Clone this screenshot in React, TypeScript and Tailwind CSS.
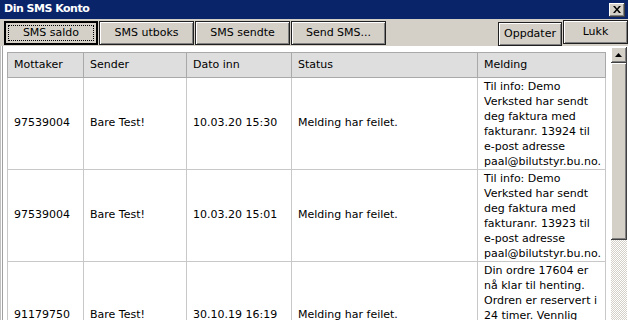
import React from 'react';

const font = "font-['DejaVu_Sans',sans-serif]";

type Row = {
  to: string;
  sender: string;
  date: string;
  status: string;
  lines: string[];
};

const rows: Row[] = [
  {
    to: '97539004',
    sender: 'Bare Test!',
    date: '10.03.20 15:30',
    status: 'Melding har feilet.',
    lines: ['Til info: Demo', 'Verksted har sendt', 'deg faktura med', 'fakturanr. 13924 til', 'e-post adresse', 'paal@bilutstyr.bu.no.'],
  },
  {
    to: '97539004',
    sender: 'Bare Test!',
    date: '10.03.20 15:01',
    status: 'Melding har feilet.',
    lines: ['Til info: Demo', 'Verksted har sendt', 'deg faktura med', 'fakturanr. 13923 til', 'e-post adresse', 'paal@bilutstyr.bu.no.'],
  },
  {
    to: '91179750',
    sender: 'Bare Test!',
    date: '30.10.19 16:19',
    status: 'Melding har feilet.',
    lines: ['Din ordre 17604 er', 'nå klar til henting.', 'Ordren er reservert i', '24 timer. Vennlig', 'hilsen Demo', 'Verksted AS', 'tlf. 32 00 00 00'],
  },
];

const ToolButton = ({ label, w, focused }: { label: string; w: string; focused?: boolean }) => (
  <div
    className={`${w} h-[24px] shrink-0 bg-[#d4d0c8] flex items-center justify-center text-[11px] text-black whitespace-nowrap ${
      focused ? 'border-2 border-black p-[2px]' : 'border border-[#202020] shadow-[inset_1px_1px_0_#fff,inset_-1px_-1px_0_#808080]'
    }`}
  >
    {focused ? (
      <div className="border border-dotted border-black w-full h-full flex items-center justify-center">{label}</div>
    ) : (
      label
    )}
  </div>
);

export default function App() {
  return (
    <div className={`w-[628px] h-[320px] overflow-hidden bg-[#d4d0c8] flex flex-col ${font}`}>
      {/* title bar */}
      <div className="h-[19px] shrink-0 bg-[#0a246a] flex items-center justify-between pl-[4px] pr-[3px]">
        <span className="text-white font-bold text-[11px] tracking-[-0.5px]">Din SMS Konto</span>
        <div className="w-[16px] h-[14px] bg-[#d4d0c8] border-r border-b border-[#404040] shadow-[inset_1px_1px_0_#fff,inset_-1px_-1px_0_#808080] flex items-center justify-center">
          <svg width="8" height="7" viewBox="0 0 8 7">
            <path d="M0 0h2l2 2.5L6 0h2L5 3.5 8 7H6L4 4.5 2 7H0l3-3.5z" fill="#000" />
          </svg>
        </div>
      </div>

      {/* toolbar */}
      <div className="h-[27px] shrink-0 flex items-start pt-[2px] pl-[4px] gap-[1px]">
        <ToolButton label="SMS saldo" w="w-[94px]" focused />
        <ToolButton label="SMS utboks" w="w-[95px]" />
        <ToolButton label="SMS sendte" w="w-[95px]" />
        <ToolButton label="Send SMS..." w="w-[95px]" />
        <div className="flex-1" />
        <div className="pt-[1px]">
          <ToolButton label="Oppdater" w="w-[64px]" />
        </div>
        <div className="-mt-[1px]">
          <ToolButton label="Lukk" w="w-[65px]" />
        </div>
      </div>

      {/* content */}
      <div className="flex-1 flex bg-white border-l border-[#c0c0c0] min-h-0">
        <div className="w-[1px] bg-white shrink-0" />
        <div className="w-[1px] bg-[#a0a0a0] shrink-0" />
        <div className="flex-1 pt-[6px] pl-[4px] overflow-hidden">
          <table className="border-collapse table-fixed text-[11px] text-black w-[598px]">
            <colgroup>
              <col className="w-[76px]" />
              <col className="w-[103px]" />
              <col className="w-[105px]" />
              <col className="w-[186px]" />
              <col className="w-[128px]" />
            </colgroup>
            <thead>
              <tr className="h-[25px] bg-[#dedede]">
                {['Mottaker', 'Sender', 'Dato inn', 'Status', 'Melding'].map((h) => (
                  <th key={h} className="border border-[#a9a9a9] text-left font-normal px-[6px]">
                    {h}
                  </th>
                ))}
              </tr>
            </thead>
            <tbody>
              {rows.map((r, i) => (
                <tr key={i}>
                  <td className="border border-[#c8c8c8] px-[6px] align-middle">{r.to}</td>
                  <td className="border border-[#c8c8c8] px-[6px] align-middle">{r.sender}</td>
                  <td className="border border-[#c8c8c8] px-[6px] align-middle">{r.date}</td>
                  <td className="border border-[#c8c8c8] px-[6px] align-middle">{r.status}</td>
                  <td className="border border-[#c8c8c8] px-[6px] pt-[1px] align-middle leading-[15px]">
                    {r.lines.map((l) => (
                      <div key={l} className="whitespace-nowrap">
                        {l}
                      </div>
                    ))}
                  </td>
                </tr>
              ))}
            </tbody>
          </table>
        </div>

        {/* scrollbar */}
        <div className="w-[16px] shrink-0 flex flex-col bg-[repeating-conic-gradient(#d4d0c8_0_25%,#ffffff_0_50%)] bg-[length:2px_2px] mt-[1px] mr-[1px]">
          <div className="h-[16px] bg-[#d4d0c8] border-r border-b border-[#404040] shadow-[inset_1px_1px_0_#fff,inset_-1px_-1px_0_#808080] flex items-center justify-center">
            <svg width="7" height="4" viewBox="0 0 7 4">
              <path d="M3.5 0L7 4H0z" fill="#000" />
            </svg>
          </div>
          <div className="h-[177px] bg-[#d4d0c8] border-r border-b border-[#404040] shadow-[inset_1px_1px_0_#fff,inset_-1px_-1px_0_#808080]" />
        </div>
      </div>
    </div>
  );
}
